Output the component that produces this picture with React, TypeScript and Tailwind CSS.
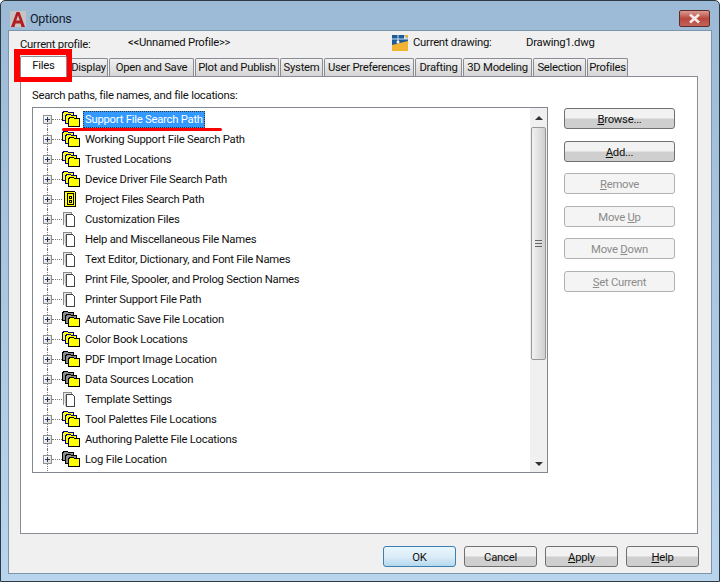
const FONT = "font-['Roboto',Arial,sans-serif]";

const tabs = [
  { label: "Display", w: "w-[39px]" },
  { label: "Open and Save", w: "w-[85px]" },
  { label: "Plot and Publish", w: "w-[84px]" },
  { label: "System", w: "w-[43px]" },
  { label: "User Preferences", w: "w-[90px]" },
  { label: "Drafting", w: "w-[47px]" },
  { label: "3D Modeling", w: "w-[69px]" },
  { label: "Selection", w: "w-[53px]" },
  { label: "Profiles", w: "w-[41px]" },
];

type Kind = "folder" | "dark" | "doc" | "project";

const rows: { label: string; kind: Kind }[] = [
  { label: "Support File Search Path", kind: "folder" },
  { label: "Working Support File Search Path", kind: "folder" },
  { label: "Trusted Locations", kind: "folder" },
  { label: "Device Driver File Search Path", kind: "folder" },
  { label: "Project Files Search Path", kind: "project" },
  { label: "Customization Files", kind: "doc" },
  { label: "Help and Miscellaneous File Names", kind: "doc" },
  { label: "Text Editor, Dictionary, and Font File Names", kind: "doc" },
  { label: "Print File, Spooler, and Prolog Section Names", kind: "doc" },
  { label: "Printer Support File Path", kind: "doc" },
  { label: "Automatic Save File Location", kind: "dark" },
  { label: "Color Book Locations", kind: "folder" },
  { label: "PDF Import Image Location", kind: "dark" },
  { label: "Data Sources Location", kind: "dark" },
  { label: "Template Settings", kind: "doc" },
  { label: "Tool Palettes File Locations", kind: "folder" },
  { label: "Authoring Palette File Locations", kind: "folder" },
  { label: "Log File Location", kind: "dark" },
];

const sideButtons = [
  { pre: "", u: "B", post: "rowse...", off: false, mt: "" },
  { pre: "", u: "A", post: "dd...", off: false, mt: "mt-[12px]" },
  { pre: "", u: "R", post: "emove", off: true, mt: "mt-[11px]" },
  { pre: "Move ", u: "U", post: "p", off: true, mt: "mt-[12px]" },
  { pre: "Move ", u: "D", post: "own", off: true, mt: "mt-[11px]" },
  { pre: "", u: "S", post: "et Current", off: true, mt: "mt-[12px]" },
];

const folderPath = (x: number, y: number) =>
  `M${x} ${y + 9}V${y + 2}l1 -2h4l1 1h5v8z`;

function TreeIcon({ kind }: { kind: Kind }) {
  if (kind === "doc") {
    return (
      <svg width="18" height="16" viewBox="0 0 18 16" shapeRendering="crispEdges">
        <path d="M1.500 13.500V1.500h8v2" fill="#e4e4e4" stroke="#8a8a8a" />
        <path d="M3.500 14.500V3.500" stroke="#bbb" />
        <path d="M4.500 3.500h6l2 2v10h-8z" fill="#fff" stroke="#444" />
      </svg>
    );
  }
  if (kind === "project") {
    return (
      <svg width="18" height="16" viewBox="0 0 18 16" shapeRendering="crispEdges">
        <path d="M2.500 .5h10l1 1v14h-11z" fill="#ffff00" stroke="#000" />
        <path d="M5.500 2.500h6v11h-6z" fill="#ffff00" stroke="#000" />
        <path d="M7.500 5.500h2v2h-2zM7.500 9.500h2v2h-2z" fill="#ffff00" stroke="#000" />
      </svg>
    );
  }
  const back = kind === "dark" ? "#8c8c8c" : "#ffff00";
  const line = kind === "dark" ? "#000" : "#000080";
  return (
    <svg width="18" height="16" viewBox="0 0 18 16" shapeRendering="crispEdges">
      <path d={folderPath(0.5, 0.5)} fill={back} stroke={line} />
      <path d={folderPath(3.5, 3.5)} fill={back} stroke={line} />
      <path d={folderPath(6.5, 6.5)} fill="#ffff00" stroke="#000" />
    </svg>
  );
}

function Btn({ children, off, w = "w-[111px]", focus }: { children: React.ReactNode; off?: boolean; w?: string; focus?: boolean }) {
  return (
    <div
      className={`${w} h-[21px] pt-[2px] flex items-center justify-center rounded-[3px] border whitespace-pre ${
        off
          ? "border-[#adb2b5] bg-[#f4f4f4] text-[#8b8b8b]"
          : focus
            ? "border-[#3c7fb1] bg-gradient-to-b from-[#e9f6fd] via-[#dcedf7] to-[#b5d8ee] text-[#111]"
            : "border-[#707070] bg-gradient-to-b from-[#f2f2f2] from-45% to-[#cfcfcf] to-55% text-[#111]"
      }`}
    >
      {children}
    </div>
  );
}

export default function App() {
  return (
    <div className={`${FONT} relative w-[720px] h-[582px] overflow-hidden text-[11.3px] tracking-[-0.25px] leading-[14px] text-[#111] flex flex-col px-[7px] pb-[7px] bg-gradient-to-b from-[#9cb9d6] to-[#b9d5ee] border border-[#2d3a44] rounded-t-[5px]`}>
      <div className="h-[29px] shrink-0 flex items-center">
        <svg width="16" height="16" viewBox="0 0 16 16" className="mr-[4px] mt-[6px] ml-[2px]">
          <rect width="16" height="16" fill="#c9c4c4" />
          <path d="M1 16L6.500 1h3L15 16h-3.500l-1-3.500h-5L4.500 16zM6.200 9.500h3.600L8 4.500z" fill="#b01e23" />
        </svg>
        <span className="text-[12.500px] text-[#10202e] mt-[6px]">Options</span>
        <div className="ml-auto mr-[2px] mt-[6px] w-[31px] h-[17px] rounded-[2px] border border-[#5e2c28] bg-gradient-to-b from-[#d99b93] via-[#b9473c] to-[#c1635a] flex items-center justify-center">
          <svg width="13" height="11" viewBox="0 0 13 11">
            <path d="M2 1.500l9 8M11 1.500l-9 8" stroke="#f4ecea" strokeWidth="2.600" />
          </svg>
        </div>
      </div>

      <div className="flex-1 min-h-0 bg-[#f0f0f0] border border-[#7d95ab] flex flex-col pl-[11px] pr-[13px]">
        <div className="h-[23px] shrink-0 flex">
          <div className="w-[108px] mt-[7px]">Current profile:</div>
          <div className="w-[264px] mt-[5px]">&lt;&lt;Unnamed Profile&gt;&gt;</div>
          <svg width="16" height="16" viewBox="0 0 16 16" className="mt-[4px] mr-[5px]">
            <rect width="16" height="16" fill="#f0b432" />
            <path d="M0 0h12l4 4v2L0 10z" fill="#1e5a96" />
            <path d="M12 0l4 4h-4z" fill="#cfe2f2" />
            <path d="M0 4h16M6 0v8" stroke="#cfe2f2" />
            <circle cx="6" cy="7" r="1.500" fill="#fff" />
          </svg>
          <div className="w-[113px] mt-[5px]">Current drawing:</div>
          <div className="mt-[5px]">Drawing1.dwg</div>
        </div>

        <div className="h-[22px] shrink-0 flex items-end gap-[1px]">
          <div className="relative z-10 w-[47px] h-[21px] mr-[1px] mb-[-1px] flex items-center justify-center bg-white border border-b-0 border-[#898c95] rounded-t-[2px] pb-[3px]">
            Files
          </div>
          {tabs.map((t) => (
            <div
              key={t.label}
              className={`${t.w} h-[18px] shrink-0 flex items-center justify-center whitespace-nowrap border border-b-0 border-[#898c95] rounded-t-[2px] bg-gradient-to-b from-[#f2f2f2] to-[#d5d5d5]`}
            >
              {t.label}
            </div>
          ))}
        </div>

        <div className="h-[458px] shrink-0 bg-white border border-[#898c95] flex flex-col pl-[11px] pr-[22px]">
          <div className="mt-[12px] h-[14px] shrink-0">Search paths, file names, and file locations:</div>
          <div className="mt-[4px] flex">
            <div className="w-[516px] h-[366px] shrink-0 border border-[#828790] flex">
              <div className="flex-1 min-w-0 overflow-hidden pl-[10px] pt-[1px]">
                {rows.map((r, i) => (
                  <div key={r.label} className="h-[20px] flex items-center">
                    <div className="relative w-[9px] h-[9px] shrink-0 border border-[#919191] bg-gradient-to-br from-white to-[#d8d8d8] flex items-center justify-center">
                      <div className="absolute left-[1px] top-[3px] w-[5px] h-px bg-[#2a3a5a]" />
                      <div className="absolute left-[3px] top-[1px] w-px h-[5px] bg-[#2a3a5a]" />
                      {i > 0 && <div className="absolute left-[3px] top-[-7px] h-[6px] border-l border-dotted border-[#777]" />}
                      <div className="absolute left-[3px] top-[8px] h-[7px] border-l border-dotted border-[#777]" />
                    </div>
                    <div className="w-[10px] shrink-0 border-t border-dotted border-[#777]" />
                    <div className="w-[18px] h-[16px] shrink-0">
                      <TreeIcon kind={r.kind} />
                    </div>
                    {i === 0 ? (
                      <span className="ml-[3px] px-[2px] pt-px h-[17px] flex items-center bg-[#3399ff] text-white outline-1 outline-dotted outline-[#333] -outline-offset-1 whitespace-nowrap">
                        {r.label}
                      </span>
                    ) : (
                      <span className="ml-[5px] pt-px whitespace-nowrap">{r.label}</span>
                    )}
                  </div>
                ))}
              </div>
              <div className="w-[17px] shrink-0 bg-[#f0f0f0] flex flex-col">
                <div className="h-[19px] flex items-center justify-center">
                  <div className="w-0 h-0 border-x-[4px] border-x-transparent border-b-[4px] border-b-[#333]" />
                </div>
                <div className="h-[233px] ml-[1px] w-[15px] rounded-[2px] border border-[#979797] bg-gradient-to-r from-[#f2f2f2] to-[#cfcfcf] flex items-center justify-center">
                  <div className="w-[7px] h-[7px] border-y border-[#666] flex items-center">
                    <div className="w-full h-px bg-[#666]" />
                  </div>
                </div>
                <div className="flex-1" />
                <div className="h-[17px] flex items-center justify-center">
                  <div className="w-0 h-0 border-x-[4px] border-x-transparent border-t-[4px] border-t-[#333]" />
                </div>
              </div>
            </div>
            <div className="ml-[16px] mt-[1px] flex flex-col">
              {sideButtons.map((b) => (
                <div key={b.pre + b.u} className={b.mt}>
                  <Btn off={b.off}>
                    {b.pre}
                    <span className="underline">{b.u}</span>
                    {b.post}
                  </Btn>
                </div>
              ))}
            </div>
          </div>
        </div>

        <div className="mt-[12px] flex justify-end gap-[8px] mr-[-1px]">
          <Btn w="w-[73px]" focus>OK</Btn>
          <Btn w="w-[73px]">Cancel</Btn>
          <Btn w="w-[73px]"><span className="underline">A</span>pply</Btn>
          <Btn w="w-[73px]"><span className="underline">H</span>elp</Btn>
        </div>
      </div>

      {/* red annotations drawn over the dialog */}
      <div className="absolute left-[13px] top-[48px] w-[58px] h-[33px] border-[6px] border-[#ff0000]" />
      <div className="absolute left-[61px] top-[127px] w-[160px] h-[3px] bg-[#ff0000] rounded-full" />
    </div>
  );
}
